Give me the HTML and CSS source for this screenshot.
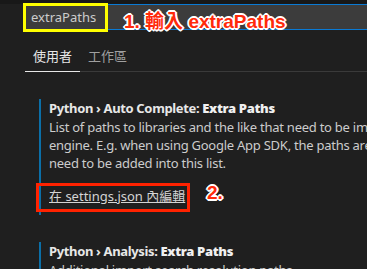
FILE: index.html
```html
<!DOCTYPE html>
<html lang="zh-Hant">
<head>
    <meta charset="UTF-8">
    <meta name="viewport" content="width=device-width, initial-scale=1.0">
    <title>設定</title>
    <link rel="stylesheet" href="styles.css">
</head>
<body>
    <div class="strip"></div>

    <div class="search">
        <span class="search-text">extraPaths</span>
        <div class="mark-yellow"></div>
        <div class="note note-one">1. 輸入 extraPaths</div>
    </div>

    <div class="tabs">
        <div class="tab active">使用者</div>
        <div class="tab">工作區</div>
    </div>

    <div class="setting focused">
        <div class="setting-title">Python › Auto Complete: <b>Extra Paths</b></div>
        <div class="setting-desc">
            <div class="line">List of paths to libraries and the like that need to be imported by the auto complete</div>
            <div class="line">engine. E.g. when using Google App SDK, the paths are not in system path, hence</div>
            <div class="line">need to be added into this list.</div>
        </div>
        <div class="link-row">
            <a class="edit-link" href="#">在 settings.json 內編輯</a>
            <div class="mark-red"></div>
            <div class="note note-two">2.</div>
        </div>
    </div>

    <div class="setting">
        <div class="setting-title">Python › Analysis: <b>Extra Paths</b></div>
        <div class="setting-desc">
            <div class="line">Additional import search resolution paths</div>
        </div>
    </div>
</body>
</html>
```

FILE: styles.css
```css
* {
    margin: 0;
    padding: 0;
    box-sizing: border-box;
}

body {
    font-family: "Noto Sans", "Noto Sans CJK TC", sans-serif;
    font-size: 13px;
    background-color: #1f1f1f;
    color: #cccccc;
    overflow: hidden;
}

.strip {
    height: 4px;
    background-color: #181818;
}

.search {
    position: relative;
    margin-left: 25px;
    height: 26px;
    background-color: #3c3c3c;
    border-top: 1px solid #0a7ad4;
    border-bottom: 1px solid #0a7ad4;
    border-left: 1px solid #0a7ad4;
    padding-left: 5px;
}

.search-text {
    line-height: 24px;
    color: #cccccc;
}

.mark-yellow {
    position: absolute;
    left: -3px;
    top: -2px;
    width: 85px;
    height: 29px;
    border: 3px solid #ffff00;
}

.note {
    position: absolute;
    font-family: "Liberation Sans", "Noto Sans CJK TC", sans-serif;
    font-weight: bold;
    font-size: 19px;
    color: #ff2a0a;
    white-space: nowrap;
    text-shadow: 1px 0 #fff, -1px 0 #fff, 0 1px #fff, 0 -1px #fff,
        1px 1px #fff, -1px -1px #fff, 1px -1px #fff, -1px 1px #fff,
        2px 0 #fff, -2px 0 #fff, 0 2px #fff, 0 -2px #fff;
}

.note-one {
    left: 98px;
    top: 1px;
}

.tabs {
    display: flex;
    margin-left: 25px;
    border-bottom: 1px solid #3a3a3a;
}

.tab {
    padding: 16px 8px 5px;
    line-height: 20px;
    color: #a0a0a0;
    font-family: "Noto Sans CJK TC", sans-serif;
    border-bottom: 1px solid transparent;
    margin-bottom: -1px;
}

.tab.active {
    color: #e7e7e7;
    border-bottom-color: #e7e7e7;
}

.setting {
    margin-left: 39px;
    margin-top: 27px;
    border-left: 2px solid transparent;
    padding: 0 0 10px 8px;
    border-left-color: #0b6fa8;
}

.setting-title {
    font-weight: bold;
    line-height: 18px;
    letter-spacing: -0.35px;
    color: #e7e7e7;
    white-space: nowrap;
}

.setting-title b {
    color: #f0f0f0;
}

.setting-desc {
    margin-top: 1px;
}

.line {
    line-height: 18px;
    letter-spacing: -0.25px;
    white-space: nowrap;
}

.link-row {
    position: relative;
    margin-top: 15px;
}

.edit-link {
    line-height: 18px;
    color: #d4d4d4;
    text-decoration: underline;
    white-space: nowrap;
}

.mark-red {
    position: absolute;
    left: -13px;
    top: -4px;
    width: 154px;
    height: 29px;
    border: 3px solid #ff2200;
}

.note-two {
    left: 158px;
    top: -5px;
}
```
